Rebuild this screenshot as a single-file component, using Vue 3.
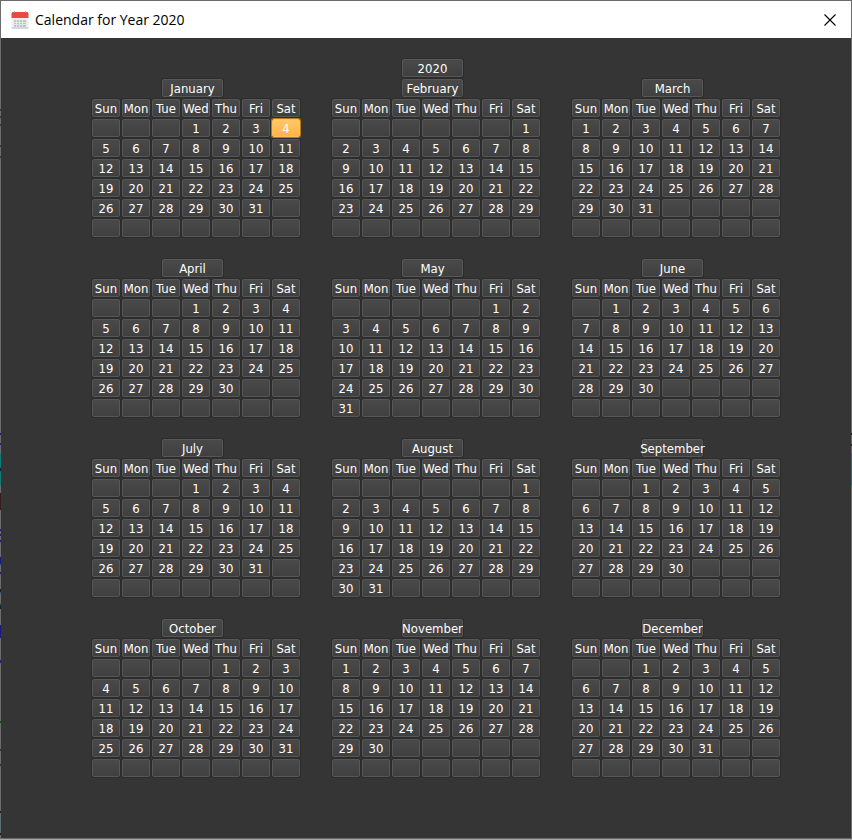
<script setup>
const year = 2020
const weekdays = ['Sun', 'Mon', 'Tue', 'Wed', 'Thu', 'Fri', 'Sat']
const names = [
  'January', 'February', 'March', 'April', 'May', 'June',
  'July', 'August', 'September', 'October', 'November', 'December',
]
const selected = { month: 0, day: 4 }

// Six weeks of seven slots per month; slots outside the month stay blank.
const months = names.map((name, index) => {
  const offset = new Date(year, index, 1).getDay()
  const total = new Date(year, index + 1, 0).getDate()
  const slots = Array.from({ length: 42 }, (_, i) => {
    const day = i - offset + 1
    return day >= 1 && day <= total ? day : ''
  })
  return { name, index, slots }
})

const isSelected = (month, day) => month === selected.month && day === selected.day
</script>

<template>
  <div class="window">
    <header class="titlebar">
      <svg class="app-icon" width="18" height="18" viewBox="0 0 18 18" aria-hidden="true">
        <path d="M0.5 5h17v11.5a1.5 1.5 0 0 1-1.500 1.500H2a1.500 1.500 0 0 1-1.500-1.500z" fill="#eceff1" />
        <path d="M0.5 16h17v.5a1.500 1.500 0 0 1-1.500 1.500H2a1.500 1.500 0 0 1-1.500-1.500z" fill="#d3d9dc" />
        <path d="M2 1h14a1.500 1.500 0 0 1 1.500 1.500V7H.5V2.500A1.500 1.500 0 0 1 2 1z" fill="#e94b3c" />
        <path d="M3 0h1v2H3zM14 0h1v2h-1z" fill="#a9a4a4" />
        <path d="M3 2h1v1H3zM14 2h1v1h-1z" fill="#b73a2f" />
        <path d="M3 9h12v7H3z" fill="#bcc5ca" />
        <path d="M5 9h1v7H5zM8 9h1v7H8zM11 9h1v7h-1zM3 11h12v1H3zM3 13h12v1H3z" fill="#e1e6e8" />
      </svg>
      <h1 class="title">Calendar for Year {{ year }}</h1>
      <button class="close" type="button" aria-label="Close">
        <svg width="12" height="12" viewBox="0 0 12 12" aria-hidden="true">
          <path d="M0.500 0.500L11.500 11.500M11.500 0.500L0.500 11.500" stroke="#000" stroke-width="1.100" fill="none" />
        </svg>
      </button>
    </header>

    <main class="body">
      <button class="key heading" type="button">{{ year }}</button>
      <div class="months">
        <section v-for="month in months" :key="month.name" class="month">
          <button class="key heading" type="button">{{ month.name }}</button>
          <div class="days">
            <button v-for="label in weekdays" :key="label" class="key" type="button">{{ label }}</button>
            <button
              v-for="(day, i) in month.slots"
              :key="i"
              class="key"
              :class="{ selected: isSelected(month.index, day) }"
              type="button"
            >{{ day }}</button>
          </div>
        </section>
      </div>
    </main>
  </div>
</template>

<style>
body {
  background: #a6a6a6;
}
</style>

<style scoped>
.window {
  box-sizing: border-box;
  display: flex;
  flex-direction: column;
  min-height: calc(100vh - 1px);
  padding: 1px;
  margin-bottom: 1px;
  background:
    linear-gradient(
      transparent 109px, #3c3c3c 109px 111px, transparent 111px 116px,
      #3c3c3c 116px 118px, transparent 118px 124px, #3c3c3c 124px 126px,
      transparent 126px 145px, #3c3c3c 145px 147px, transparent 147px 156px,
      #3c3c3c 156px 158px, transparent 158px 433px, #1d1a80 433px 435px,
      transparent 435px 443px, #1d1a80 443px 445px, transparent 445px 453px,
      #0f7a7a 453px 468px, #1c1c1c 468px 471px, #0f7a7a 471px 485px,
      transparent 485px 493px, #3a1c1e 493px 510px, transparent 510px 529px,
      #1d1a80 529px 531px, transparent 531px 534px, #1d1a80 534px 536px,
      transparent 536px 540px, #1d1a80 540px 542px, transparent 542px 557px,
      #1d1a80 557px 564px, #2d6285 564px 566px, transparent 566px 572px,
      #1d1a80 572px 574px, transparent 574px 589px, #2a2018 589px 592px,
      #2d6285 592px 594px, transparent 594px 603px, #2d5a70 603px 605px,
      #2a2018 605px 609px, transparent 609px 625px, #1d1a80 625px 638px,
      transparent 638px 660px, #1d1a80 660px 663px, transparent 663px 721px,
      #1d4a1d 721px 723px, transparent 723px 749px, #1d4a1d 749px 751px,
      transparent 751px 764px, #1d4a1d 764px 766px, transparent 766px 811px,
      #1c1c1c 811px 813px, #5c7072 813px 833px, #1c1c1c 833px 835px,
      transparent 835px
    ) left top / 1px 100% no-repeat,
    linear-gradient(
      transparent 433px, #1c1c1c 433px 435px, transparent 435px 444px,
      #1c1c1c 444px 446px, transparent 446px 453px, #0f7a7a 453px 485px,
      transparent 485px
    ) right top / 1px 100% no-repeat,
    #6b6b6b;
}

.titlebar {
  display: flex;
  align-items: center;
  height: 37px;
  padding-left: 10px;
  background: #fff;
}

.app-icon {
  flex: none;
}

.title {
  flex: 1;
  margin: 0 0 0 6px;
  font: 400 14px/20px "Open Sans", "Noto Sans", sans-serif;
  color: #000;
}

.close {
  display: flex;
  align-items: center;
  justify-content: center;
  width: 42px;
  height: 37px;
  padding: 0;
  border: 0;
  background: none;
}

.body {
  flex: 1;
  display: flex;
  flex-direction: column;
  align-items: center;
  gap: 2px;
  padding: 21px 0 60px 20px;
  background: #353535;
}

.months {
  display: grid;
  grid-template-columns: repeat(3, auto);
  gap: 22px 32px;
}

.month {
  display: flex;
  flex-direction: column;
  align-items: center;
  gap: 2px;
}

.days {
  display: grid;
  grid-template-columns: repeat(7, 28px);
  gap: 2px;
}

.key {
  box-sizing: border-box;
  display: flex;
  align-items: center;
  justify-content: center;
  height: 18px;
  padding: 2px 0 0;
  border: 1px solid #575757;
  border-radius: 2px;
  background: linear-gradient(#494949, #404040);
  box-shadow: 0 0 0 1px #2c2c2c;
  color: #fff;
  font: 13px/16px "DejaVu Sans Condensed", "Noto Sans", sans-serif;
  white-space: nowrap;
}

.heading {
  width: 61px;
  margin-right: 7px;
}

.selected {
  border-color: #ffc05a;
  background: linear-gradient(#ffc769, #ffb545);
  box-shadow: 0 0 0 1px #b67a1d;
}
</style>
